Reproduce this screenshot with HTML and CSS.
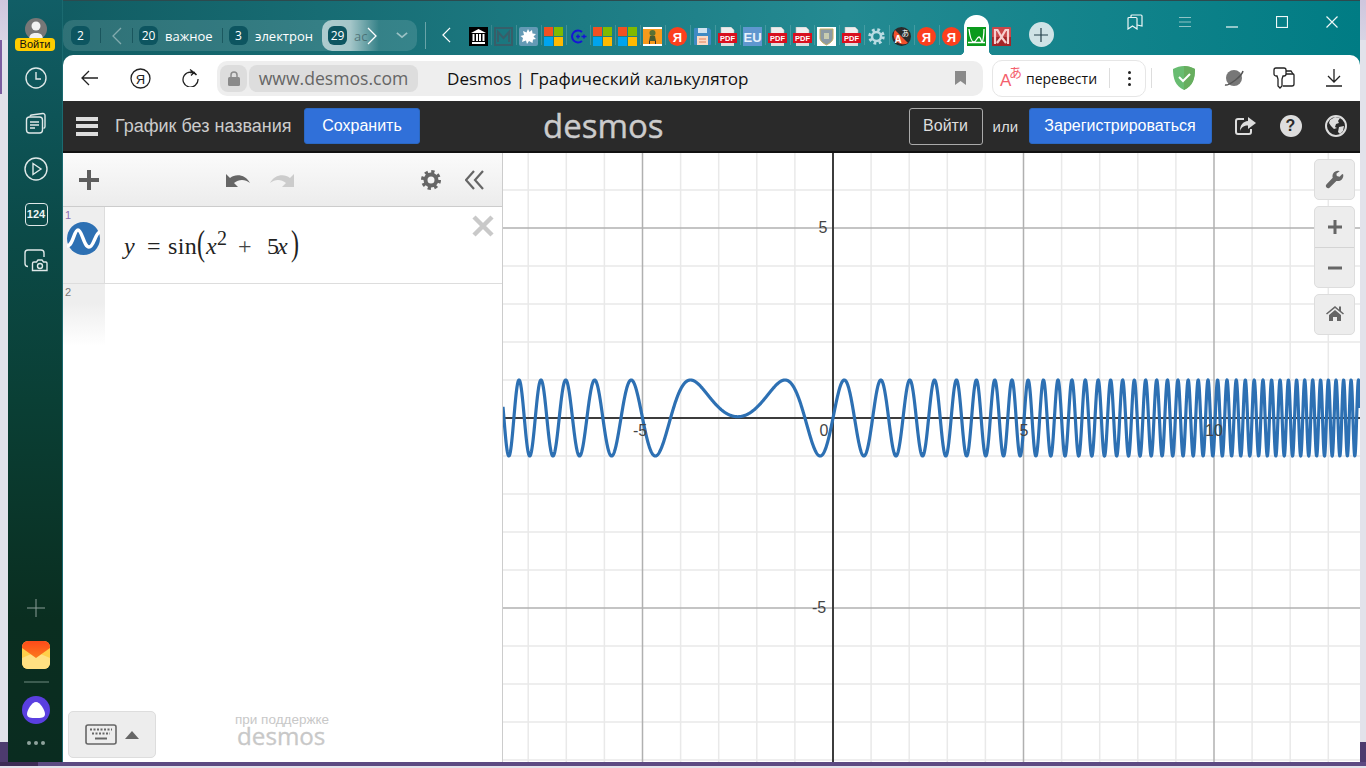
FILE: index.html
```html
<!DOCTYPE html>
<html lang="ru">
<head>
<meta charset="utf-8">
<title>Desmos | Графический калькулятор</title>
<link rel="stylesheet" href="styles.css">
</head>
<body>
<svg class="defs" width="0" height="0" aria-hidden="true">
  <symbol id="ms" viewBox="0 0 19 19"><rect width="9" height="9" fill="#f25022"/><rect x="10" width="9" height="9" fill="#7fba00"/><rect y="10" width="9" height="9" fill="#00a4ef"/><rect x="10" y="10" width="9" height="9" fill="#ffb900"/></symbol>
</svg>
<div class="window">
  <aside class="sidebar">
    <div class="account">
      <div class="avatar"><svg viewBox="0 0 22 22" width="22" height="22"><circle cx="11" cy="8" r="4.5" fill="#f2f2f2"/><path d="M4 22c0-6 3-7 7-7s7 1 7 7z" fill="#f2f2f2"/></svg></div>
      <div class="login-badge">Войти</div>
    </div>
    <div class="side-slot"><svg viewBox="0 0 24 24" width="24" height="24" class="side-icon"><circle cx="12" cy="12" r="10"/><path d="M12 6v7h5"/></svg></div>
    <div class="side-slot"><svg viewBox="0 0 24 24" width="24" height="24" class="side-icon"><path d="M6 5.500a2 2 0 0 1 1.700-1.500l11-1.500a2 2 0 0 1 2.300 2v11a2 2 0 0 1-1.500 1.900"/><rect x="2.500" y="6" width="16" height="16" rx="3"/><path d="M6 11h9M6 14h9M6 17h5"/></svg></div>
    <div class="side-slot"><svg viewBox="0 0 24 24" width="24" height="24" class="side-icon"><circle cx="12" cy="12" r="11"/><path d="M9 6.500l8 5.500-8 5.500z"/></svg></div>
    <div class="side-slot"><div class="counter-box">124</div></div>
    <div class="side-slot"><svg viewBox="0 0 24 24" width="24" height="24" class="side-icon"><path d="M4 18.500a3 3 0 0 1-3-3V5a3 3 0 0 1 3-3h13a3 3 0 0 1 3 3v4"/><path d="M8.500 23v-7a1.500 1.500 0 0 1 1.500-1.500h2.500l1.500-2h4l1.500 2h2.500a1.500 1.500 0 0 1 1 1.500v7z" transform="translate(0 -.5)"/><circle cx="16" cy="18" r="2.500"/></svg></div>
    <div class="side-spacer"></div>
    <svg viewBox="0 0 18 18" width="18" height="18" class="side-plus"><path d="M9 0v18M0 9h18"/></svg>
    <div class="mail-icon"><svg viewBox="0 0 28 28" width="28" height="28"><defs><linearGradient id="mailTop" x1="0" y1="0" x2="0" y2="1"><stop offset="0" stop-color="#fc4a1a"/><stop offset="1" stop-color="#fc7a1d"/></linearGradient></defs><rect width="28" height="28" rx="6" fill="#ffcf4a"/><path d="M0 17l14-6 14 6v5a6 6 0 0 1-6 6H6a6 6 0 0 1-6-6z" fill="#ffe082"/><path d="M0 6a6 6 0 0 1 6-6h16a6 6 0 0 1 6 6v1l-14 10L0 7z" fill="url(#mailTop)"/></svg></div>
    <div class="side-rule"></div>
    <div class="alice"><svg viewBox="0 0 18 16" width="18" height="16"><path d="M9 0c4 0 9 8 9 12s-4 4-9 4-9 0-9-4S5 0 9 0z" fill="#fff"/></svg></div>
    <div class="side-dots"><i></i><i></i><i></i></div>
  </aside>

  <div class="main">
    <div class="tabbar">
      <div class="tab-group">
        <span class="badge first">2</span>
        <span class="tab-sep"></span>
        <span class="tab-chev"><svg viewBox="0 0 12 18" width="12" height="18"><path d="M10 1L2 9l8 8"/></svg></span>
        <span class="tab-sep"></span>
        <span class="badge">20</span>
        <span class="tab-label w-47">важное</span>
        <span class="tab-sep"></span>
        <span class="badge">3</span>
        <span class="tab-label w-58">электрон</span>
        <div class="tab-active">
          <span class="badge">29</span>
          <span class="tab-fade">ас</span>
          <svg class="chev-next" viewBox="0 0 12 18" width="12" height="18"><path d="M2 1l8 8-8 8"/></svg>
          <svg class="chev-down" viewBox="0 0 14 8" width="12" height="7"><path d="M1 1l6 5 6-5"/></svg>
        </div>
      </div>
      <span class="pin-sep"></span>
      <span class="pin-back"><svg viewBox="0 0 12 18" width="11" height="16"><path d="M10 1L2 9l8 8"/></svg></span>
      <div class="favs">
        <span class="fav"><svg viewBox="0 0 19 19" width="19" height="19"><rect width="19" height="19" fill="#000"/><path d="M9.500 2L17 6H2z M3 15h13v2H3z" fill="#fff"/><path d="M4.500 7v7M8 7v7M11 7v7M14.500 7v7" stroke="#fff" stroke-width="2"/></svg></span>
        <span class="fav dim"><svg viewBox="0 0 19 19" width="19" height="19"><rect x="1" y="1" width="17" height="17" fill="none" stroke="#3d5a66" stroke-width="2"/><path d="M4 15V5l5.500 6L15 5v10" fill="none" stroke="#3d5a66" stroke-width="2"/></svg></span>
        <span class="fav"><svg viewBox="0 0 19 19" width="19" height="19"><rect width="19" height="19" rx="2" fill="#649ab5"/><path d="M9 2l1.500 3L13 3l.5 3.500L17 7l-2.500 2.500L17 12l-3 .5L13.500 16 10 14l-2 3-1-3.500L3 15l1-4-2.500-2L5 8 4 4l3.500 1.500z" fill="#fff"/></svg></span>
        <span class="fav"><svg width="19" height="19"><use href="#ms"/></svg></span>
        <span class="fav"><svg viewBox="0 0 19 19" width="19" height="19"><path d="M13 5a6 6 0 1 0 0 9" fill="none" stroke="#1414d8" stroke-width="2"/><path d="M7 9.500h4M9 7.500v4M12.500 9.500h5M15 7.500v4" stroke="#1414d8" stroke-width="1.500"/></svg></span>
        <span class="fav"><svg width="19" height="19"><use href="#ms"/></svg></span>
        <span class="fav"><svg width="19" height="19"><use href="#ms"/></svg></span>
        <span class="fav"><svg viewBox="0 0 19 19" width="19" height="19"><rect width="19" height="19" fill="#f79a1c"/><rect width="19" height="2" fill="#fff"/><rect y="17" width="19" height="2" fill="#fff"/><circle cx="9.500" cy="6" r="3" fill="#5b7034"/><path d="M7 9h5l1 5H6z" fill="#4a5a30"/><path d="M6.500 14v3M12.500 14v3" stroke="#333"/></svg></span>
        <span class="fav"><svg viewBox="0 0 19 19" width="19" height="19"><circle cx="9.500" cy="9.500" r="9.500" fill="#fc3f1d"/><text x="9.500" y="15" text-anchor="middle" class="fav-ya">Я</text></svg></span>
        <span class="fav"><svg viewBox="0 0 19 19" width="19" height="19"><path d="M1 2a1 1 0 0 1 1-1h14l2 2v14a1 1 0 0 1-1 1H2a1 1 0 0 1-1-1z" fill="#3f8ac4"/><rect x="5" y="1" width="9" height="5" fill="#cfe2ef"/><rect x="4" y="9" width="11" height="9" fill="#fbd9c4"/><path d="M6 12h7M6 15h7" stroke="#e0805a"/></svg></span>
        <span class="fav"><svg viewBox="0 0 19 19" width="19" height="19"><path d="M3 0h10l3 3v5H3z" fill="#eee" stroke="#bbb" stroke-width=".6"/><path d="M3 13h13v6H3z" fill="#ddd"/><rect y="6" width="19" height="10" fill="#d8101f"/><text x="9.500" y="14.400" text-anchor="middle" class="fav-pdf">PDF</text></svg></span>
        <span class="fav"><svg viewBox="0 0 19 19" width="19" height="19"><rect width="19" height="19" fill="#5f97cf"/><text x="9.500" y="15" text-anchor="middle" class="fav-eu">EU</text></svg></span>
        <span class="fav"><svg viewBox="0 0 19 19" width="19" height="19"><path d="M3 0h10l3 3v5H3z" fill="#eee" stroke="#bbb" stroke-width=".6"/><path d="M3 13h13v6H3z" fill="#ddd"/><rect y="6" width="19" height="10" fill="#d8101f"/><text x="9.500" y="14.400" text-anchor="middle" class="fav-pdf">PDF</text></svg></span>
        <span class="fav"><svg viewBox="0 0 19 19" width="19" height="19"><path d="M3 0h10l3 3v5H3z" fill="#eee" stroke="#bbb" stroke-width=".6"/><path d="M3 13h13v6H3z" fill="#ddd"/><rect y="6" width="19" height="10" fill="#d8101f"/><text x="9.500" y="14.400" text-anchor="middle" class="fav-pdf">PDF</text></svg></span>
        <span class="fav"><svg viewBox="0 0 19 19" width="19" height="19"><rect width="19" height="19" fill="#fff"/><path d="M3 2h13v9c0 3-3 5-6.500 7C6 16 3 14 3 11z" fill="#8d9aa3" stroke="#c6b05e"/><path d="M7 6h5v6H7z" fill="#c9ccb0"/></svg></span>
        <span class="fav"><svg viewBox="0 0 19 19" width="19" height="19"><path d="M3 0h10l3 3v5H3z" fill="#eee" stroke="#bbb" stroke-width=".6"/><path d="M3 13h13v6H3z" fill="#ddd"/><rect y="6" width="19" height="10" fill="#d8101f"/><text x="9.500" y="14.400" text-anchor="middle" class="fav-pdf">PDF</text></svg></span>
        <span class="fav"><svg viewBox="0 0 19 19" width="19" height="19"><circle cx="9.500" cy="9.500" r="6.500" fill="none" stroke="#b9dbe2" stroke-width="3.500" stroke-dasharray="2.600 2.500"/><circle cx="9.500" cy="9.500" r="4.500" fill="none" stroke="#b9dbe2" stroke-width="2.500"/></svg></span>
        <span class="fav"><svg viewBox="0 0 19 19" width="19" height="19"><circle cx="9.500" cy="9.500" r="9.500" fill="#2b2b2b"/><path d="M3 3l13 13a9.500 9.500 0 0 1-13-13z" fill="#f4512c"/><text x="2.500" y="16" class="fav-a">A</text><text x="9.500" y="9" class="fav-jp">あ</text></svg></span>
        <span class="fav"><svg viewBox="0 0 19 19" width="19" height="19"><circle cx="9.500" cy="9.500" r="9.500" fill="#fc3f1d"/><text x="9.500" y="15" text-anchor="middle" class="fav-ya">Я</text></svg></span>
        <span class="fav"><svg viewBox="0 0 19 19" width="19" height="19"><circle cx="9.500" cy="9.500" r="9.500" fill="#fc3f1d"/><text x="9.500" y="15" text-anchor="middle" class="fav-ya">Я</text></svg></span>
        <span class="fav fav-current"><svg viewBox="0 0 19 19" width="19" height="19"><rect width="19" height="19" fill="#0a9a1d"/><path d="M2 2c1 9 3 13 5 13s3-5 5-5 2 5 3 5 2-8 2-13M1 15.500h17" fill="none" stroke="#fff" stroke-width="1.300"/></svg></span>
        <span class="fav"><svg viewBox="0 0 19 19" width="19" height="19"><rect width="19" height="19" rx="1" fill="#c9474a"/><path d="M0 10h19v9H0z" fill="#a32427"/><path d="M3 17V3h2.500l4 7 4-7H16v14M5 16l4.500-6 4.500 6" fill="none" stroke="#f6d0d0" stroke-width="2.200"/></svg></span>
      </div>
      <span class="new-tab"><svg viewBox="0 0 14 14" width="14" height="14"><path d="M7 0v14M0 7h14"/></svg></span>
      <div class="win-controls">
        <span class="win-btn"><svg viewBox="0 0 16 16" width="16" height="16"><path d="M1 4.500a1 1 0 0 1 1-1h7a1 1 0 0 1 1 1V15l-4.500-3L1 15z"/><path d="M4 3.500V2a1 1 0 0 1 1-1h9a1 1 0 0 1 1 1v10l-5-1"/></svg></span>
        <span class="win-btn gap"><svg viewBox="0 0 14 12" width="14" height="12" class="muted"><path d="M1 1.500h12M1 6h12M1 10.500h12"/></svg></span>
        <span class="win-btn"><svg viewBox="0 0 12 12" width="12" height="12"><path d="M0 11h12"/></svg></span>
        <span class="win-btn"><svg viewBox="0 0 12 12" width="12" height="12"><rect x=".5" y=".5" width="11" height="11"/></svg></span>
        <span class="win-btn"><svg viewBox="0 0 12 12" width="12" height="12"><path d="M.5.500l11 11M11.500.500l-11 11"/></svg></span>
      </div>
    </div>

    <div class="toolbar">
      <span class="tool tool-back"><svg viewBox="0 0 18 16" width="18" height="16"><path d="M17 8H1M8 1L1 8l7 7"/></svg></span>
      <span class="tool"><svg viewBox="0 0 21 21" width="21" height="21"><circle cx="10.500" cy="10.500" r="9.500"/><text x="10.500" y="16" text-anchor="middle" class="ya-mark">Я</text></svg></span>
      <span class="tool"><svg viewBox="0 0 18 18" width="18" height="18"><path d="M15.500 6A7.500 7.500 0 1 0 17 10M9 3.500h5M9 .5l4 3-3 3"/></svg></span>
      <div class="address">
        <span class="lock-box"><svg viewBox="0 0 12 15" width="12" height="15"><rect y="6" width="12" height="9" rx="1.500" fill="#8a8a8a"/><path d="M3 6V4a3 3 0 0 1 6 0v2" fill="none" stroke="#8a8a8a" stroke-width="1.500"/></svg></span>
        <span class="url-box">www.desmos.com</span>
        <span class="page-title">Desmos | Графический калькулятор</span>
        <svg class="bookmark" viewBox="0 0 11 14" width="11" height="14"><path d="M0 0h11v14l-5.500-4L0 14z" fill="#8a8a8a"/></svg>
      </div>
      <div class="translate">
        <span class="tr-mark"><span class="tr-a">A</span><span class="tr-j">あ</span></span>
        <span class="tr-text">перевести</span>
        <span class="tr-sep"></span>
        <span class="tr-dots"><i></i><i></i><i></i></span>
      </div>
      <span class="bar-sep"></span>
      <span class="tool first-ext"><svg viewBox="0 0 22 24" width="22" height="24"><path d="M11 0c4 0 7 1 11 3 0 9-2 17-11 21C2 20 0 12 0 3c4-2 7-3 11-3z" fill="#68bc71"/><path d="M11 0c4 0 7 1 11 3 0 9-2 17-11 21z" fill="#67ae5e"/><path d="M6 11l4 4 7-7" fill="none" stroke="#fff" stroke-width="2"/></svg></span>
      <span class="tool"><svg viewBox="0 0 20 20" width="20" height="20" class="planet"><circle cx="10" cy="10" r="8" fill="#777"/><path d="M1 17c4 1 17-9 18-14" fill="none" stroke="#555" stroke-width="1.500"/></svg></span>
      <span class="tool"><svg viewBox="0 0 22 22" width="22" height="22"><path d="M3 1h8a2 2 0 0 1 2 2v4a2 2 0 0 1-2 2h-1l-1 3v7l-2 2-2-2v-7L4 9H3a2 2 0 0 1-2-2V3a2 2 0 0 1 2-2z"/><path d="M13 7h7a1 1 0 0 1 1 1v9a2 2 0 0 1-2 2h-9"/><path d="M13 4h5l2 3"/></svg></span>
      <span class="tool"><svg viewBox="0 0 16 18" width="16" height="18"><path d="M8 0v13M2 7l6 6 6-6M0 17h16"/></svg></span>
    </div>

    <header class="dz-header">
      <span class="burger"><i></i><i></i><i></i></span>
      <span class="dz-title">График без названия</span>
      <button class="dz-btn save">Сохранить</button>
      <span class="dz-logo">desmos</span>
      <button class="dz-login">Войти</button>
      <span class="dz-or">или</span>
      <button class="dz-btn register">Зарегистрироваться</button>
      <span class="dz-ico"><svg viewBox="0 0 22 20" width="22" height="20"><path d="M9 3H3a2 2 0 0 0-2 2v11a2 2 0 0 0 2 2h11a2 2 0 0 0 2-2v-3" fill="none" stroke="#ddd" stroke-width="2"/><path d="M13 1l8 6-8 6V9.500C9 9.500 6.500 11 5 15c0-6 3-9.500 8-10z" fill="#ddd"/></svg></span>
      <span class="dz-ico"><span class="help">?</span></span>
      <span class="dz-ico"><svg viewBox="0 0 22 22" width="22" height="22"><circle cx="11" cy="11" r="10" fill="#2a2a2a" stroke="#ddd" stroke-width="2"/><path d="M5 5l5-3 5 1-2 3 1 2-3 1-1 3 2 1-3 1-3-3-2-3zM14 12l5-1-1 5-3 3-2-2z" fill="#ddd"/></svg></span>
    </header>

    <div class="dz-body">
      <section class="panel">
        <div class="panel-head">
          <span class="ph plus"><svg viewBox="0 0 20 20" width="20" height="20"><path d="M10 0v20M0 10h20" stroke="#5e5e5e" stroke-width="4"/></svg></span>
          <span class="ph undo"><svg viewBox="0 0 26 16" width="26" height="16"><path d="M1 2v13h12l-4-4c5-4 11-4 16 0-4-8-14-10-20-5z" fill="#666"/></svg></span>
          <span class="ph"><svg viewBox="0 0 26 16" width="26" height="16"><path d="M25 2v13H13l4-4c-5-4-11-4-16 0 4-8 14-10 20-5z" fill="#ccc"/></svg></span>
          <span class="ph gear"><svg viewBox="0 0 20 20" width="20" height="20"><circle cx="10" cy="10" r="8" fill="none" stroke="#666" stroke-width="4" stroke-dasharray="3.100 3.180"/><circle cx="10" cy="10" r="5.500" fill="none" stroke="#666" stroke-width="4"/></svg></span>
          <span class="ph"><svg viewBox="0 0 20 20" width="20" height="20"><path d="M9 1L1 10l8 9M18 1l-8 9 8 9" fill="none" stroke="#666" stroke-width="2.200"/></svg></span>
        </div>
        <div class="list">
          <div class="row row-one">
            <div class="gutter">
              <span class="idx one">1</span>
              <svg class="wave" viewBox="0 0 33 33" width="33" height="33"><circle cx="16.500" cy="16.500" r="16.500" fill="#2d70b3"/><path d="M0 24C6 24 7 8 11 8s6 17 11 17 6-14 11-15" fill="none" stroke="#fff" stroke-width="3.500"/></svg>
            </div>
            <div class="math">
              <i class="m-y">y</i><span class="m-eq">=</span><span class="m-sin">sin</span><span class="paren">(</span><i class="m-x">x</i><sup class="m-sq">2</sup><span class="m-plus">+</span><span class="m-5">5</span><i class="m-x2">x</i><span class="paren right">)</span>
            </div>
            <svg class="del" viewBox="0 0 22 22" width="22" height="22"><path d="M2 2l18 18M20 2L2 20" stroke="#c9c9c9" stroke-width="4.500"/></svg>
          </div>
          <div class="row row-two">
            <div class="gutter fade"><span class="idx">2</span></div>
          </div>
        </div>
        <div class="panel-foot">
          <div class="kbd-btn">
            <svg viewBox="0 0 32 21" width="32" height="21"><rect x="1" y="1" width="30" height="19" rx="2" fill="none" stroke="#666" stroke-width="1.600"/><path d="M5 5.500h22M7 9.500h18" stroke="#666" stroke-width="1.800" stroke-dasharray="2 1.500"/><path d="M10 14.500h12" stroke="#666" stroke-width="2"/></svg>
            <svg viewBox="0 0 14 8" width="14" height="8"><path d="M7 0l7 8H0z" fill="#666"/></svg>
          </div>
          <div class="powered"><span class="pw-text">при поддержке</span><span class="pw-logo">desmos</span></div>
        </div>
      </section>

      <section class="graph">
        <svg id="plot" class="plot" viewBox="0 0 857 609" width="857" height="609">
          <g id="minor" class="g-minor"></g>
          <g id="major" class="g-major"></g>
          <path class="axis" d="M0 265H857M330 0V609"/>
          <path id="curve" class="curve" d=""/>
          <text x="320" y="80" class="tick" text-anchor="middle">5</text>
          <text x="316" y="460" class="tick" text-anchor="middle">-5</text>
          <text x="137" y="283" class="tick" text-anchor="middle">-5</text>
          <text x="321" y="283" class="tick" text-anchor="middle">0</text>
          <text x="521" y="283" class="tick" text-anchor="middle">5</text>
          <text x="711" y="283" class="tick" text-anchor="middle">10</text>
        </svg>
        <div class="tools">
          <div class="t-card"><svg viewBox="0 0 22 22" width="20" height="20"><path d="M16 1a6 6 0 0 0-7.500 7.500L1.500 16a2.500 2.500 0 0 0 3.500 3.500l7.500-7.500A6 6 0 0 0 20 5l-1-.5-3 3-3-1-.5-2.500 3.500-2.500z" fill="#666"/></svg></div>
          <div class="t-card double">
            <span class="t-half"><svg viewBox="0 0 14 14" width="14" height="14"><path d="M7 0v14M0 7h14" stroke="#666" stroke-width="3"/></svg></span>
            <span class="t-half"><svg viewBox="0 0 14 14" width="14" height="14"><path d="M0 7h14" stroke="#666" stroke-width="3"/></svg></span>
          </div>
          <div class="t-card"><svg class="home-ico" viewBox="0 0 18 16" width="18" height="16"><path d="M9 1L0 8.500l1 1L9 3l8 6.500 1-1-3-2.500V1.500h-2V4.500z" fill="#666"/><path d="M3 10l6-5 6 5v6h-4v-4H7v4H3z" fill="#666"/></svg></div>
        </div>
      </section>
    </div>
  </div>
</div>
<script src="app.js"></script>
</body>
</html>
```

FILE: styles.css
```css
* { box-sizing: border-box; }
html, body { margin: 0; height: 768px; overflow: hidden; }
body {
  width: 1366px;
  font-family: "Liberation Sans", Arial, sans-serif;
  background:
    linear-gradient(#5c4a82, #5c4a82) 38px 762px / 1328px 4px no-repeat,
    linear-gradient(#3c2c55, #3c2c55) 0 762px / 38px 4px no-repeat,
    linear-gradient(#4d3b6e, #4d3b6e) 0 742px / 1366px 20px no-repeat,
    linear-gradient(#7b5ea0, #7b5ea0) 0 40px / 2px 54px no-repeat,
    linear-gradient(#cfc6dd, #d8d4e4) 0 0 / 1366px 40px no-repeat,
    #e2e2ea;
}
.defs { position: absolute; }
.fav-ya { font: 700 13px "Liberation Sans", sans-serif; fill: #fff; }
.fav-pdf { font: 700 7.500px "Liberation Sans", sans-serif; fill: #fff; }
.fav-eu { font: 700 13px "Liberation Sans", sans-serif; fill: #e8f2fb; }
.fav-a { font: 700 10px "Liberation Sans", sans-serif; fill: #fff; }
.fav-jp { font: 7.500px "Noto Sans CJK JP", sans-serif; fill: #fff; }

.window {
  display: flex;
  width: 1352px;
  height: 762px;
  margin-left: 8px;
  background: linear-gradient(90deg, #10595f 0, #1c7a82 40%, #248a92 62%, #007c84 100%);
  border-top: 1px solid #2c4a4e;
}

/* sidebar */
.sidebar {
  width: 55px;
  flex: none;
  display: flex;
  flex-direction: column;
  align-items: center;
  padding: 18px 0 17px 1px;
  margin-top: -1px;
  background: linear-gradient(#115e66 0, #0b4a48 230px, #0a3f35 400px, #0a2e20 620px, #0a2c20 100%);
  box-shadow: inset -1px 0 #1b6a70;
}
.account { position: relative; height: 37px; width: 54px; display: flex; flex-direction: column; align-items: center; }
.avatar { width: 22px; height: 22px; border-radius: 50%; background: #777; overflow: hidden; }
.login-badge {
  position: absolute;
  top: 20px;
  left: 6px;
  width: 40px;
  height: 13px;
  border-radius: 4px;
  background: #fc0;
  color: #111;
  font-size: 11px;
  line-height: 13px;
  text-align: center;
}
.side-slot { width: 54px; height: 45.500px; display: flex; align-items: center; justify-content: center; flex: none; }
.side-icon { fill: none; stroke: #dfe8e8; stroke-width: 1.400; }
.counter-box {
  width: 23px;
  height: 23px;
  border: 1.500px solid #dfe8e8;
  border-radius: 4px;
  color: #eef4f4;
  font-size: 11px;
  font-weight: 700;
  line-height: 20px;
  text-align: center;
}
.side-spacer { flex: 1; }
.side-plus { stroke: #8a9e98; stroke-width: 1; flex: none; }
.mail-icon { margin-top: 24px; height: 28px; }
.side-rule { width: 25px; height: 2px; margin-top: 12px; background: #3c5c50; }
.alice {
  width: 28px;
  height: 28px;
  margin-top: 13px;
  border-radius: 50%;
  background: #5a3fe0;
  display: flex;
  align-items: center;
  justify-content: center;
}
.side-dots { display: flex; gap: 3px; margin-top: 17px; }
.side-dots i { width: 4px; height: 4px; border-radius: 50%; background: #8fa39c; }

/* main column */
.main { width: 1297px; flex: none; display: flex; flex-direction: column; }

.tabbar { height: 54px; flex: none; display: flex; align-items: flex-start; color: #fff; }
.tab-group {
  display: flex;
  align-items: center;
  width: 354px;
  height: 31px;
  margin-top: 19px;
  padding-left: 8px;
  border-radius: 10px;
  background: rgba(255, 255, 255, .13);
  font: 13px "Open Sans", sans-serif;
}
.badge {
  width: 19px;
  height: 19px;
  flex: none;
  border-radius: 6px;
  background: #0d5560;
  color: #fff;
  font-size: 12px;
  line-height: 19px;
  text-align: center;
}
.badge.first { margin-right: 10px; }
.tab-sep { width: 1px; height: 15px; flex: none; background: rgba(0, 50, 60, .45); }
.tab-chev { width: 31px; display: flex; justify-content: center; flex: none; }
.tab-chev svg { fill: none; stroke: rgba(255, 255, 255, .4); stroke-width: 1.300; }
.tab-sep + .badge { margin-left: 6px; }
.tab-label { margin: 0 9px 0 7px; white-space: nowrap; flex: none; color: #fff; }
.w-47 { width: 47px; margin-right: 10px; }
.w-58 { width: 58px; }
.tab-active {
  position: relative;
  width: 95px;
  height: 31px;
  flex: none;
  display: flex;
  align-items: center;
  padding-left: 6px;
  border-radius: 10px;
  background: linear-gradient(90deg, rgba(255, 255, 255, .6) 0, rgba(255, 255, 255, .55) 30%, rgba(255, 255, 255, 0) 60%);
}
.tab-fade { margin-left: 7px; color: rgba(60, 90, 95, .7); }
.chev-next { position: absolute; left: 44px; top: 7px; fill: none; stroke: #fff; stroke-width: 1.300; }
.chev-down { position: absolute; left: 74px; top: 12px; fill: none; stroke: rgba(255, 255, 255, .5); stroke-width: 2; }
.pin-sep { width: 1px; height: 27px; margin: 21px 0 0 8px; flex: none; background: rgba(255, 255, 255, .35); }
.pin-back { width: 41px; margin-top: 26px; display: flex; justify-content: center; flex: none; }
.pin-back svg { fill: none; stroke: #fff; stroke-width: 1.400; }
.favs { display: flex; height: 54px; padding-top: 14px; flex: none; margin-left: -1px; }
.fav {
  width: 24.900px;
  height: 40px;
  padding-top: 12px;
  flex: none;
  display: flex;
  justify-content: center;
  position: relative;
}
.fav + .fav::before {
  content: "";
  position: absolute;
  left: 0;
  top: 10px;
  width: 1px;
  height: 20px;
  background: rgba(255, 255, 255, .16);
}
.fav.dim { opacity: .85; }
.fav-current { background: #fff; border-radius: 12px 12px 0 0; }
.fav-current::before { display: none; }
.fav-current + .fav::before { display: none; }
.fav-current::after {
  content: "";
  position: absolute;
  left: -5px;
  right: -5px;
  bottom: 0;
  height: 5px;
  background:
    radial-gradient(circle at 0 0, transparent 5px, #fff 5.500px) left / 5px 5px no-repeat,
    radial-gradient(circle at 100% 0, transparent 5px, #fff 5.500px) right / 5px 5px no-repeat;
}
.new-tab {
  width: 25px;
  height: 25px;
  margin: 21px 0 0 15px;
  flex: none;
  border-radius: 50%;
  background: #cfe3e6;
  display: flex;
  align-items: center;
  justify-content: center;
}
.new-tab svg { stroke: #23404a; stroke-width: 1.200; }
.win-controls { display: flex; margin-left: auto; padding-right: 3px; }
.win-btn { width: 50px; height: 42px; display: flex; align-items: center; justify-content: center; }
.win-btn.gap { margin-right: -3px; }
.win-btn svg { fill: none; stroke: #eef7f7; stroke-width: 1.200; }
.win-btn svg.muted { stroke: #8fc4c6; }

.toolbar {
  height: 46px;
  flex: none;
  display: flex;
  align-items: center;
  padding-left: 2px;
  background: #fff;
  border-radius: 10px 10px 0 0;
}
.tool { width: 50px; display: flex; justify-content: center; align-items: center; flex: none; }
.tool svg { fill: none; stroke: #222; stroke-width: 1.300; }
.ya-mark { font: 13px "Liberation Sans", sans-serif; fill: #222; stroke: none; }
.tool .planet { stroke: none; }
.address {
  display: flex;
  align-items: center;
  width: 766px;
  height: 35px;
  margin-left: 2px;
  padding-left: 3px;
  border-radius: 10px;
  background: #eee;
  flex: none;
}
.lock-box {
  width: 27px;
  height: 27px;
  border-radius: 8px;
  background: #ddd;
  display: flex;
  align-items: center;
  justify-content: center;
  flex: none;
}
.url-box {
  width: 169px;
  height: 27px;
  margin-left: 2px;
  border-radius: 8px;
  background: #ddd;
  color: #666;
  font: 17.600px/27px "Open Sans", sans-serif;
  text-align: center;
  white-space: nowrap;
  flex: none;
}
.page-title { margin-left: 29px; color: #111; font: 17.100px "Open Sans", sans-serif; white-space: nowrap; }
.bookmark { margin-left: auto; margin-right: 17px; }
.translate {
  width: 154px;
  height: 37px;
  margin-left: 9px;
  padding-left: 7px;
  border: 1px solid #e6e6e6;
  border-radius: 10px;
  display: flex;
  align-items: center;
  flex: none;
}
.tr-mark { position: relative; width: 20px; height: 24px; flex: none; color: #f4606c; }
.tr-a { position: absolute; left: 0; top: 6px; font-size: 17px; line-height: 18px; }
.tr-j { position: absolute; left: 9px; top: -1px; font: 13px/14px "Noto Sans CJK JP", sans-serif; }
.tr-text { margin-left: 6px; width: 71px; font: 14px "Open Sans", sans-serif; color: #111; white-space: nowrap; flex: none; }
.tr-sep { width: 1px; height: 20px; margin-left: 12px; background: #ddd; flex: none; }
.tr-dots { margin-left: 18px; display: flex; flex-direction: column; gap: 3px; }
.tr-dots i { width: 3px; height: 3px; border-radius: 50%; background: #222; }
.bar-sep { width: 1px; height: 20px; margin-left: 5px; background: #ddd; flex: none; }
.first-ext { margin-left: 7px; }
.first-ext svg { stroke: none; }

.dz-header {
  height: 52px;
  flex: none;
  display: flex;
  align-items: center;
  padding: 0 2px 0 13px;
  background: #2a2a2a;
  border-bottom: 2px solid #111;
  color: #ddd;
}
.burger { width: 22px; display: flex; flex-direction: column; gap: 3.500px; flex: none; }
.burger i { height: 4px; background: #ddd; }
.dz-title { width: 177px; margin-left: 17px; font-size: 18px; color: #ccc; white-space: nowrap; flex: none; }
.dz-btn {
  height: 36px;
  border: 1px solid #2b68c2;
  border-radius: 3px;
  background: #3070d9;
  color: #fff;
  font: 16px "Liberation Sans", sans-serif;
  padding: 0;
  flex: none;
}
.save { width: 116px; margin-left: 12px; }
.register { width: 183px; margin-left: 10px; }
.dz-logo { width: 120px; margin-left: 123px; font: 400 33px/36px "Open Sans", sans-serif; -webkit-text-stroke: .4px #ccc; color: #ccc; white-space: nowrap; flex: none; }
.dz-login {
  width: 74px;
  height: 37px;
  margin-left: auto;
  border: 1px solid #aaa;
  border-radius: 3px;
  background: transparent;
  color: #ddd;
  font: 16px "Liberation Sans", sans-serif;
  padding: 0;
  flex: none;
}
.dz-or { margin-left: 10px; width: 26px; font-size: 15px; color: #ddd; flex: none; }
.dz-ico { width: 45px; display: flex; justify-content: center; flex: none; }
.register + .dz-ico { margin-left: 11.500px; }
.help {
  width: 22px;
  height: 22px;
  border-radius: 50%;
  background: #ddd;
  color: #2a2a2a;
  font-size: 16px;
  font-weight: 700;
  line-height: 22px;
  text-align: center;
}

.dz-body { flex: 1; min-height: 0; display: flex; background: #fff; }
.panel { width: 440px; flex: none; display: flex; flex-direction: column; border-right: 1px solid #ccc; }
.panel-head {
  height: 54px;
  flex: none;
  display: flex;
  align-items: center;
  background: linear-gradient(#fbfbfb, #ececec);
  border-bottom: 1px solid #ccc;
}
.ph { width: 44px; display: flex; justify-content: center; flex: none; }
.ph.plus { width: 52px; }
.ph.undo { margin-left: 101px; }
.ph.gear { margin-left: 105px; }
.list { flex: 1; min-height: 0; }
.row { display: flex; position: relative; }
.row-one { height: 77px; border-bottom: 1px solid #ddd; }
.row-two { height: 62px; }
.gutter {
  width: 42px;
  flex: none;
  position: relative;
  background: #eee;
  border-right: 1px solid #ddd;
}
.gutter.fade { background: linear-gradient(#eee 30%, #fff 100%); border-right: 0; }
.idx { position: absolute; left: 2px; top: 1px; font-size: 11px; line-height: 14px; color: #777; }
.idx.one { color: #8b6fb0; }
.wave { position: absolute; left: 4px; top: 15px; }
.del { position: absolute; right: 8px; top: 8px; }
.math {
  display: flex;
  align-items: baseline;
  height: 76px;
  padding: 26px 0 0 19px;
  font: 24px/26px "Liberation Serif", serif;
  color: #222;
  white-space: nowrap;
}
.m-y { width: 11px; }
.m-eq { margin-left: 12px; width: 14px; }
.m-sin { margin-left: 7px; width: 29px; letter-spacing: .4px; }
.paren { display: inline-block; width: 9px; transform: translateY(-3px) scale(1, 1.500); font-weight: 400; }
.m-x { width: 11px; }
.m-sq { font-size: 20px; line-height: 0; position: relative; top: -9px; width: 10px; }
.m-plus { margin-left: 11px; width: 14px; color: #444; }
.m-5 { margin-left: 15px; width: 10px; }
.m-x2 { width: 12px; }
.paren.right { margin-left: 2px; }

.panel-foot { height: 56px; flex: none; display: flex; align-items: flex-start; padding: 5px 0 0 5px; }
.kbd-btn {
  width: 88px;
  height: 47px;
  padding-left: 16px;
  display: flex;
  align-items: center;
  gap: 8px;
  border: 1px solid #ddd;
  border-radius: 5px;
  background: #ededed;
  flex: none;
}
.powered { margin-left: 79px; display: flex; flex-direction: column; flex: none; padding-top: 1px; }
.pw-text { font-size: 13.500px; line-height: 15px; color: #c8c8c8; white-space: nowrap; }
.pw-logo { margin-left: 2px; font: 400 24.200px/18px "Open Sans", sans-serif; -webkit-text-stroke: .3px #c8c8c8; color: #c8c8c8; }

.graph { flex: 1; min-width: 0; position: relative; overflow: hidden; }
.plot { display: block; }
.g-minor { stroke: #e9e9e9; stroke-width: 1.500; }
.g-major { stroke: #b0b0b0; stroke-width: 1.500; }
.axis { stroke: #3c3c3c; stroke-width: 2; fill: none; }
.curve { fill: none; stroke: #2d70b3; stroke-width: 3.200; stroke-linejoin: round; }
.tick { font: 16px "Liberation Sans", sans-serif; fill: #444; }
.tools { position: absolute; left: 811px; top: 6px; display: flex; flex-direction: column; gap: 6px; }
.t-card {
  width: 41px;
  height: 41px;
  border: 1px solid #ddd;
  border-radius: 5px;
  background: #ededed;
  display: flex;
  align-items: center;
  justify-content: center;
}
.t-card.double { height: 82px; flex-direction: column; }
.t-half { width: 100%; height: 40px; display: flex; align-items: center; justify-content: center; }
.t-half + .t-half { border-top: 1px solid #d4d4d4; }
.home-ico { margin-bottom: 3px; }
```

FILE: app.js
```js
(function () {
  var W = 857, H = 609, OX = 330, OY = 265, SX = 38.1, SY = 38;
  var NS = "http://www.w3.org/2000/svg";
  function line(group, x1, y1, x2, y2) {
    var l = document.createElementNS(NS, "line");
    l.setAttribute("x1", x1); l.setAttribute("y1", y1);
    l.setAttribute("x2", x2); l.setAttribute("y2", y2);
    group.appendChild(l);
  }
  var minor = document.getElementById("minor");
  var major = document.getElementById("major");
  var i, x, y;
  for (i = -10; i <= 15; i++) {
    x = OX + i * SX;
    if (x >= 0 && x <= W && i !== 0) line(i % 5 === 0 ? major : minor, x, 0, x, H);
  }
  for (i = -10; i <= 10; i++) {
    y = OY + i * SY;
    if (y >= 0 && y <= H && i !== 0) line(i % 5 === 0 ? major : minor, 0, y, W, y);
  }
  var d = [];
  for (var px = 0; px <= W; px += 0.25) {
    var t = (px - OX) / SX;
    var v = OY - Math.sin(t * t + 5 * t) * SY;
    d.push((d.length ? "L" : "M") + px.toFixed(2) + " " + v.toFixed(2));
  }
  document.getElementById("curve").setAttribute("d", d.join(""));
})();
```
